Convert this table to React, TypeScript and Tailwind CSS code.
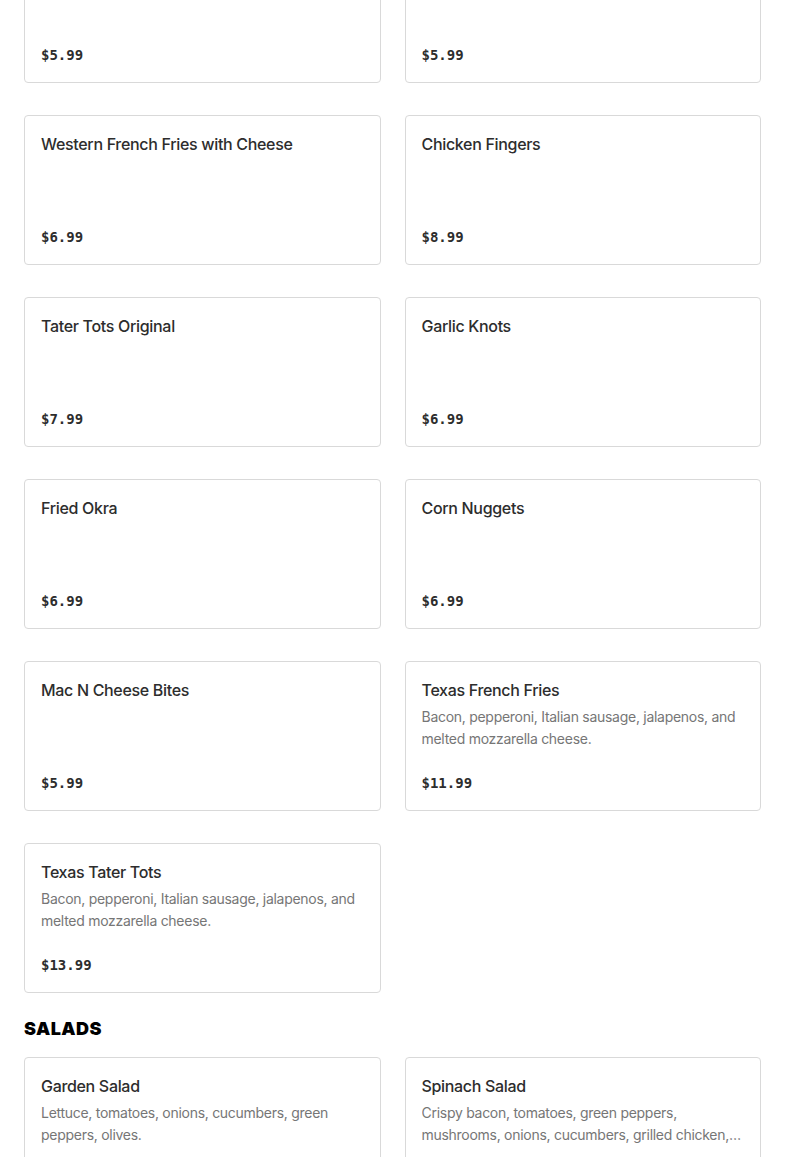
type Item = { name: string; price: string; desc?: string };

const appetizers: Item[] = [
  { name: "Mozzarella Sticks", price: "$5.99" },
  { name: "Onion Rings", price: "$5.99" },
  { name: "Western French Fries with Cheese", price: "$6.99" },
  { name: "Chicken Fingers", price: "$8.99" },
  { name: "Tater Tots Original", price: "$7.99" },
  { name: "Garlic Knots", price: "$6.99" },
  { name: "Fried Okra", price: "$6.99" },
  { name: "Corn Nuggets", price: "$6.99" },
  { name: "Mac N Cheese Bites", price: "$5.99" },
  {
    name: "Texas French Fries",
    price: "$11.99",
    desc: "Bacon, pepperoni, Italian sausage, jalapenos, and melted mozzarella cheese.",
  },
  {
    name: "Texas Tater Tots",
    price: "$13.99",
    desc: "Bacon, pepperoni, Italian sausage, jalapenos, and melted mozzarella cheese.",
  },
];

const salads: Item[] = [
  {
    name: "Garden Salad",
    price: "$8.99",
    desc: "Lettuce, tomatoes, onions, cucumbers, green peppers, olives.",
  },
  {
    name: "Spinach Salad",
    price: "$11.99",
    desc: "Crispy bacon, tomatoes, green peppers, mushrooms, onions, cucumbers, grilled chicken, hard boiled eggs and croutons.",
  },
];

function MenuCard({ item }: { item: Item }) {
  return (
    <div className="flex h-[150px] flex-col rounded border border-[#d9d9d9] bg-white p-4">
      <h3 className="text-base leading-6 font-medium tracking-[-0.02em] text-[#2d2d2d]">
        {item.name}
      </h3>
      {item.desc && (
        <p className="mt-1 line-clamp-2 text-sm leading-[22px] tracking-[-0.02em] text-[#767676]">
          {item.desc}
        </p>
      )}
      <span
        className="mt-auto mb-px text-sm leading-5 font-bold text-[#2d2d2d]"
        style={{ fontFamily: '"DejaVu Sans Mono", "Liberation Mono", monospace' }}
      >
        {item.price}
      </span>
    </div>
  );
}

export default function App() {
  return (
    <div
      className="min-h-screen overflow-hidden bg-white"
      style={{ fontFamily: 'Inter, "Noto Sans", sans-serif' }}
    >
      <div className="-mt-[67px] px-6">
        <div className="grid grid-cols-2 gap-x-6 gap-y-8">
          {appetizers.map((item) => (
            <MenuCard key={item.name} item={item} />
          ))}
        </div>

        <h2 className="mt-6 mb-4 text-lg leading-6 font-black tracking-wide text-black uppercase">
          Salads
        </h2>
        <div className="grid grid-cols-2 gap-x-6 gap-y-8">
          {salads.map((item) => (
            <MenuCard key={item.name} item={item} />
          ))}
        </div>
      </div>
    </div>
  );
}
